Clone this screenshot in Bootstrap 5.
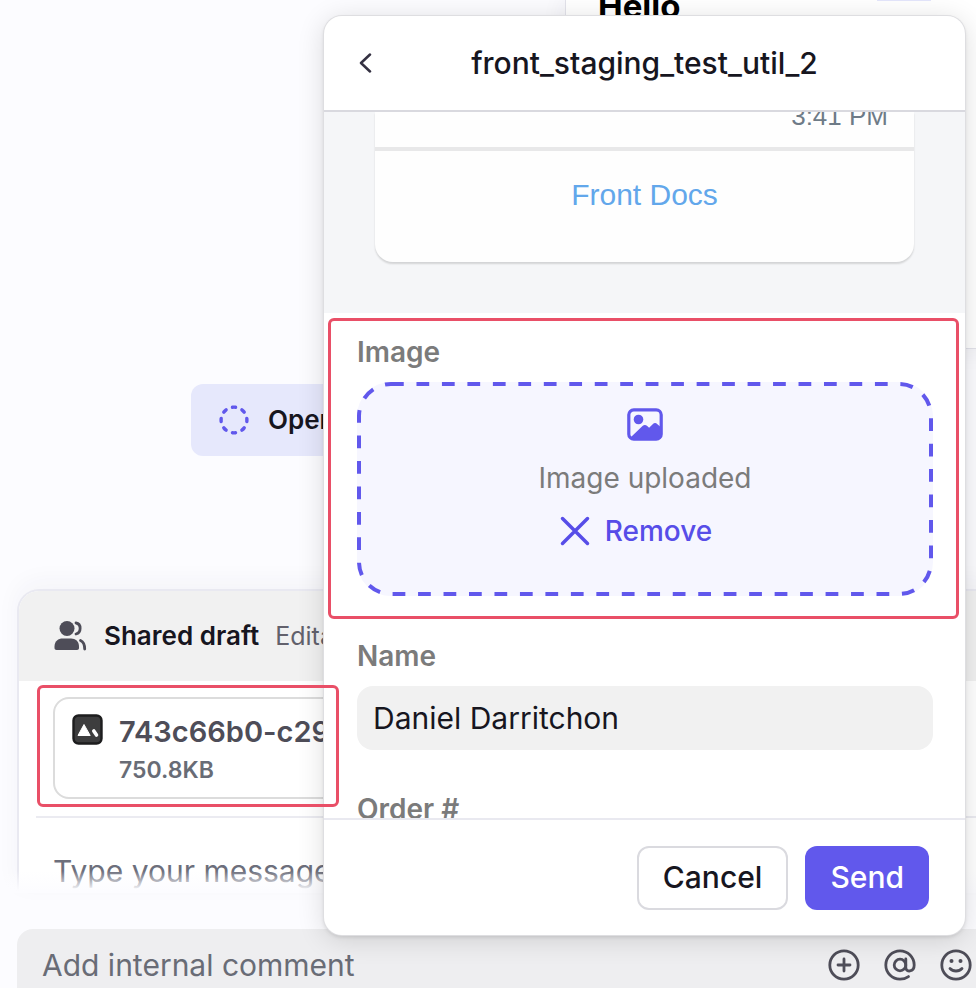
<!DOCTYPE html>
<html lang="en">
<head>
<meta charset="utf-8">
<meta name="viewport" content="width=device-width, initial-scale=1">
<title>front_staging_test_util_2</title>
<link rel="stylesheet" href="https://cdn.jsdelivr.net/npm/bootstrap@5.3.0/dist/css/bootstrap.min.css">
<style>
  :root { --accent: #6158ec; --mark-red: #e94f67; --ink: #17161f; --slate: #4e4d58; }
  body { font-family: Inter, "Liberation Sans", sans-serif; background: #fff; color: var(--ink); font-size: 28px; line-height: 36px; }
  svg { display: block; flex: none; }

  /* conversation behind the dialog */
  .shell { background: #fcfcff; }
  .bubble { margin-left: 565px; margin-right: -24px; height: 349px; background: #fff; border: 1px solid #e2e2ea; border-top: 0; padding-left: 32px; box-shadow: 0 0 24px rgba(40,40,70,.07); }
  .bubble-title { font-size: 33px; line-height: 40px; font-weight: 700; color: #000; margin-top: -14px; }
  .bubble-tag { width: 54px; height: 1px; background: #e3e5fb; margin-right: 68px; }
  .status-chip { margin: 35px 0 133px 191px; height: 72px; width: 200px; background: #e6e8fc; border-radius: 12px; padding-left: 28px; gap: 19px; font-size: 26px; font-weight: 600; }
  .composer { margin-left: 17px; margin-right: -24px; background: #fff; border: 2px solid #e9e9f1; border-bottom: 0; border-radius: 22px 22px 0 0; box-shadow: 0 -8px 24px rgba(40,40,70,.04); }
  .composer-head { background: #f1f1f1; height: 90px; border-radius: 20px 20px 0 0; padding-left: 35px; gap: 16px; font-size: 26px; }
  .composer-head .kind { font-weight: 600; }
  .composer-head .mode { color: #62616c; font-size: 25px; }
  .attach-row { margin-left: 17px; padding: 16px 0 17px 17px; border-bottom: 2px solid #ebebf1; }
  .attachment { width: 360px; height: 102px; border: 2px solid #dcdcdc; border-radius: 16px; padding: 15px 0 0 17px; gap: 16px; }
  .file-name { font-size: 29px; font-weight: 600; color: var(--slate); }
  .file-size { font-size: 23px; font-weight: 600; color: #686c76; line-height: 40px; }
  .callout-file { left: 1px; top: 4px; width: 302px; height: 122px; border: 3px solid var(--mark-red); border-radius: 6px; z-index: 20; }
  .message { height: 75px; }
  .message input, .comment input { border: 0; background: transparent; outline: 0; padding: 0; font-size: 30px; }
  .message input { margin: 33px 0 0 34px; height: 40px; width: 360px; }
  .message input::placeholder { color: #6d6f7c; opacity: 1; }
  .message::after { content: ""; position: absolute; left: -44px; right: 0; bottom: 0; height: 22px; background: linear-gradient(rgba(252,252,255,0), #fcfcff 90%); }
  .comment { margin: 36px 0 0 17px; height: 59px; background: #eeeef0; border-radius: 16px 0 0 0; padding: 12px 4px 0 25px; gap: 23px; color: var(--slate); }
  .comment input { height: 48px; }
  .comment input::placeholder { color: #696c76; opacity: 1; }
  .icon-btn { border: 0; background: transparent; padding: 0; color: inherit; }

  /* dialog */
  .sheet { left: 324px; right: 11px; top: 16px; bottom: 53px; z-index: 10; background: #fff; border-radius: 18px; box-shadow: 0 0 0 1px #dedee1, 0 4px 28px rgba(0,0,0,.14), 0 2px 4px rgba(0,0,0,.12); }
  .sheet-head { height: 96px; border-bottom: 2px solid #d9d9df; padding: 0 35px; font-size: 30px; }
  .sheet-head h1 { font-size: inherit; font-weight: 500; line-height: 36px; }
  .sheet-head .spacer { width: 14px; }
  .sheet-body { min-height: 0; }
  .preview { background: #f5f6f8; padding: 0 51px 51px; }
  .preview-card { background: #fefefe; border-radius: 0 0 18px 18px; box-shadow: 0 2px 2px rgba(0,0,0,.14); font-family: "Liberation Sans", Arial, sans-serif; }
  .preview-time { height: 35px; padding-right: 26px; font-size: 26px; color: #6e7b87; }
  .preview-time span { margin-top: -14px; }
  .preview-link { border-top: 4px solid #e8e8e9; height: 115px; font-size: 30px; padding-top: 26px; }
  .preview-link a { color: #62a7eb; text-decoration: none; }
  .image-field { margin: 5px 6px 0 4px; border: 3px solid var(--mark-red); border-radius: 6px; padding: 13px 23px 20px 26px; }
  .field-label { color: #7b7b7b; font-weight: 600; font-size: 28px; line-height: 36px; }
  .dropzone { height: 214px; margin-top: 12px; background: #f6f6ff; border-radius: 34px; padding-top: 26px; color: #7b7b7b; }
  .dropzone .frame { left: 0; top: 0; width: 100%; height: 100%; overflow: visible; }
  .dropzone .frame rect { width: calc(100% - 4px); height: calc(100% - 4px); }
  .dropzone .state { margin-top: 19px; }
  .remove { border: 0; background: transparent; color: #574de8; font-weight: 500; padding: 0 18px 0 0; margin-top: 17px; gap: 15px; }
  .text-field { padding: 19px 32px 0 33px; }
  .text-field .field-input { border: 0; background: #f1f1f1; border-radius: 16px; height: 64px; padding: 0 16px; margin-top: 12px; font-size: 30px; color: var(--ink); }
  .order { padding-top: 41px; }
  .sheet-foot { height: 117px; border-top: 2px solid #e9e9f0; padding: 0 36px 0 0; gap: 17px; border-radius: 0 0 18px 18px; }
  .act { height: 64px; font-size: 30px; font-weight: 500; border-radius: 12px; padding: 0 24px; }
  .act-cancel { border: 2px solid #dadadf; color: var(--ink); background: #fff; }
  .act-send { background: var(--accent); color: #fff; }
</style>
<script src="https://cdn.jsdelivr.net/npm/bootstrap@5.3.0/dist/js/bootstrap.bundle.min.js"></script>
</head>
<body>
<main class="shell position-relative overflow-hidden">
  <section class="bubble d-flex justify-content-between">
    <div class="bubble-title">Hello</div>
    <div class="bubble-tag"></div>
  </section>

  <div class="status-chip d-flex align-items-center">
    <svg width="30" height="30" viewBox="0 0 30 30" fill="none" stroke="#6158ec" stroke-width="3.4" stroke-linecap="round" aria-hidden="true"><circle cx="15" cy="15" r="12.9" pathLength="80" stroke-dasharray="3.2 6.8" stroke-dashoffset="1.6"/></svg>
    <span>Open</span>
  </div>

  <section class="composer">
    <div class="composer-head d-flex align-items-center">
      <svg width="34" height="30" viewBox="0 0 34 30" fill="#4e4d58" aria-hidden="true">
        <circle cx="13" cy="7.500" r="7.500"/>
        <path d="M.5 27v-1.500C.5 20 4.500 17.500 8.500 17.500H17c4.500 0 8 2.800 8 8V27c0 1.300-.8 2-2 2H2.500c-1.200 0-2-.7-2-2z"/>
        <path d="M22 2c5.500.8 5.500 9.800 0 11M26.500 19.500c3.300 1.500 4.200 4.300 4.200 8.500" fill="none" stroke="#4e4d58" stroke-width="2.800" stroke-linecap="round"/>
      </svg>
      <span class="kind">Shared draft</span>
      <span class="mode">Editable</span>
    </div>
    <div class="attach-row position-relative">
      <div class="attachment d-flex">
        <svg width="31" height="31" viewBox="0 0 31 31" aria-hidden="true"><rect x="1.500" y="1.500" width="28" height="28" rx="5" fill="#3d3d3e" stroke="#1d1d1e" stroke-width="2.400"/><path d="M6 21.500 12 10.500l6.200 11z" fill="#fff" stroke="#fff" stroke-linejoin="round"/><path d="m21.800 17 2.700 4" stroke="#fff" stroke-width="3.600" stroke-linecap="round"/></svg>
        <div>
          <div class="file-name">743c66b0-c29</div>
          <div class="file-size">750.8KB</div>
        </div>
      </div>
      <div class="callout-file position-absolute"></div>
    </div>
    <div class="message position-relative">
      <input type="text" aria-label="Message" placeholder="Type your message">
    </div>
  </section>

  <section class="comment d-flex align-items-start">
    <input class="flex-fill" type="text" aria-label="Internal comment" placeholder="Add internal comment">
    <button class="icon-btn mt-2" type="button" aria-label="Add"><svg width="32" height="32" viewBox="0 0 32 32" fill="none" stroke="currentColor" stroke-width="2.800" stroke-linecap="round"><circle cx="16" cy="16" r="14.200"/><path d="M16 10v12M10 16h12"/></svg></button>
    <button class="icon-btn mt-2" type="button" aria-label="Mention"><svg width="34" height="32" viewBox="0 0 34 32" fill="none" stroke="currentColor" stroke-width="2.800" stroke-linecap="round"><circle cx="17" cy="16" r="5.800"/><path d="M22.800 10v8.500c0 5 8.400 5 8.400-2.500A14.200 14.200 0 1 0 17 30.200c3.200 0 6-.8 8.500-2.600"/></svg></button>
    <button class="icon-btn mt-2" type="button" aria-label="Emoji"><svg width="32" height="32" viewBox="0 0 32 32" fill="none" stroke="currentColor" stroke-width="2.800" stroke-linecap="round"><circle cx="16" cy="16" r="14.200"/><path d="M10 19.500c3 3.300 9 3.300 12 0"/><circle cx="11.500" cy="12" r="2" fill="currentColor" stroke="none"/><circle cx="20.500" cy="12" r="2" fill="currentColor" stroke="none"/></svg></button>
  </section>

  <div class="sheet position-absolute d-flex flex-column" role="dialog" aria-labelledby="sheet-title">
    <header class="sheet-head flex-shrink-0 d-flex align-items-center justify-content-between">
      <button class="icon-btn" type="button" aria-label="Back"><svg width="14" height="20" viewBox="0 0 14 20" fill="none" stroke="#343142" stroke-width="2.500" stroke-linecap="round" stroke-linejoin="round"><path d="M11 1.500 2 10l9 8.500"/></svg></button>
      <h1 id="sheet-title" class="m-0">front_staging_test_util_2</h1>
      <span class="spacer"></span>
    </header>

    <form class="sheet-body flex-fill overflow-hidden">
      <div class="preview">
        <div class="preview-card">
          <div class="preview-time d-flex justify-content-end"><span>3:41 PM</span></div>
          <div class="preview-link text-center"><a href="#docs">Front Docs</a></div>
        </div>
      </div>

      <div class="image-field">
        <div class="field-label">Image</div>
        <div class="dropzone position-relative d-flex flex-column align-items-center">
          <svg class="frame position-absolute" aria-hidden="true"><rect x="2" y="2" rx="32" fill="none" stroke="#6158ec" stroke-width="4" stroke-dasharray="12.75 12.72"/></svg>
          <svg width="36" height="33" viewBox="0 0 36 33" aria-hidden="true"><rect x="1.800" y="1.800" width="32.400" height="29.400" rx="5" fill="none" stroke="#6158ec" stroke-width="3.200"/><circle cx="11.500" cy="11.500" r="4.800" fill="#6158ec"/><path d="M3.500 29.500 15.500 18c1.500-1.500 3.200-1.500 4.700 0l1.900 1.800 3.600-3.600c1.600-1.500 3.200-1.500 4.700 0l4.200 3.600v6.700c0 3-2 5-5 5H6.500z" fill="#6158ec"/></svg>
          <div class="state">Image uploaded</div>
          <button class="remove d-flex align-items-center" type="button">
            <svg width="30" height="30" viewBox="0 0 30 30" fill="none" stroke="currentColor" stroke-width="3.500" stroke-linecap="round" aria-hidden="true"><path d="m2.500 2.500 25 25M27.500 2.500l-25 25"/></svg>
            Remove
          </button>
        </div>
      </div>

      <div class="text-field">
        <label class="field-label d-block" for="name">Name</label>
        <input id="name" class="field-input w-100 d-block" type="text" value="Daniel Darritchon">
      </div>
      <div class="text-field order">
        <div class="field-label">Order #</div>
      </div>
    </form>

    <footer class="sheet-foot flex-shrink-0 d-flex align-items-center justify-content-end">
      <button class="btn act act-cancel" type="button">Cancel</button>
      <button class="btn act act-send" type="button">Send</button>
    </footer>
  </div>
</main>
</body>
</html>
